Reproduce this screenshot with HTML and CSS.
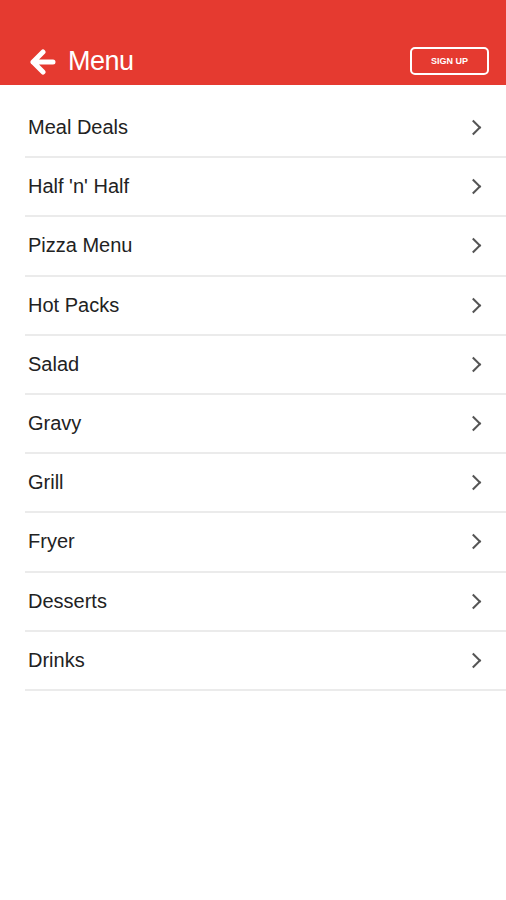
FILE: index.html
```html
<!DOCTYPE html>
<html>
  <head>
    <meta name="viewport" content="width=device-width, initial-scale=1.0" />
    <link rel="stylesheet" href="styles.css">
  </head>
  <body>
    <header class="topbar">
      <div class="title">
        <svg class="back" width="26" height="26" viewBox="0 0 26 26">
          <path d="M13 3 L3 13 L13 23 M3 13 H23" fill="none" stroke="#fff" stroke-width="5" stroke-linecap="round" stroke-linejoin="round" />
        </svg>
        <span>Menu</span>
      </div>
      <button class="signup">SIGN UP</button>
    </header>
    <ul class="menu-list">
      <li><span>Meal Deals</span><i class="chev"></i></li>
      <li><span>Half 'n' Half</span><i class="chev"></i></li>
      <li><span>Pizza Menu</span><i class="chev"></i></li>
      <li><span>Hot Packs</span><i class="chev"></i></li>
      <li><span>Salad</span><i class="chev"></i></li>
      <li><span>Gravy</span><i class="chev"></i></li>
      <li><span>Grill</span><i class="chev"></i></li>
      <li><span>Fryer</span><i class="chev"></i></li>
      <li><span>Desserts</span><i class="chev"></i></li>
      <li><span>Drinks</span><i class="chev"></i></li>
    </ul>
  </body>
</html>
```

FILE: styles.css
```css
body {
  margin: 0;
  background: #fff;
  font-family: "Liberation Sans", Arial, sans-serif;
  color: #222;
}
.topbar {
  height: 85px;
  background: #e53a30;
  display: flex;
  align-items: flex-end;
  justify-content: space-between;
  padding: 0 17px 10px 30px;
  box-sizing: border-box;
}
.title {
  display: flex;
  align-items: center;
  color: #fff;
  font-size: 27px;
  font-weight: 300;
  letter-spacing: -0.5px;
  margin-bottom: -2px;
}
.title .back {
  margin-right: 12px;
}
.signup {
  width: 79px;
  height: 28px;
  border: 2px solid #fff;
  border-radius: 5px;
  background: transparent;
  color: #fff;
  font-family: "Liberation Sans", Arial, sans-serif;
  font-size: 9px;
  font-weight: bold;
  padding: 0;
}
.menu-list {
  list-style: none;
  margin: 14px 0 0 25px;
  padding: 0;
}
.menu-list li {
  height: 57.2px;
  border-bottom: 2px solid #ebebeb;
  display: flex;
  align-items: center;
  justify-content: space-between;
  padding: 0 27px 0 3px;
  font-size: 20px;
}
.chev {
  width: 9px;
  height: 9px;
  border-right: 2px solid #555;
  border-bottom: 2px solid #555;
  transform: rotate(-45deg);
}
```
